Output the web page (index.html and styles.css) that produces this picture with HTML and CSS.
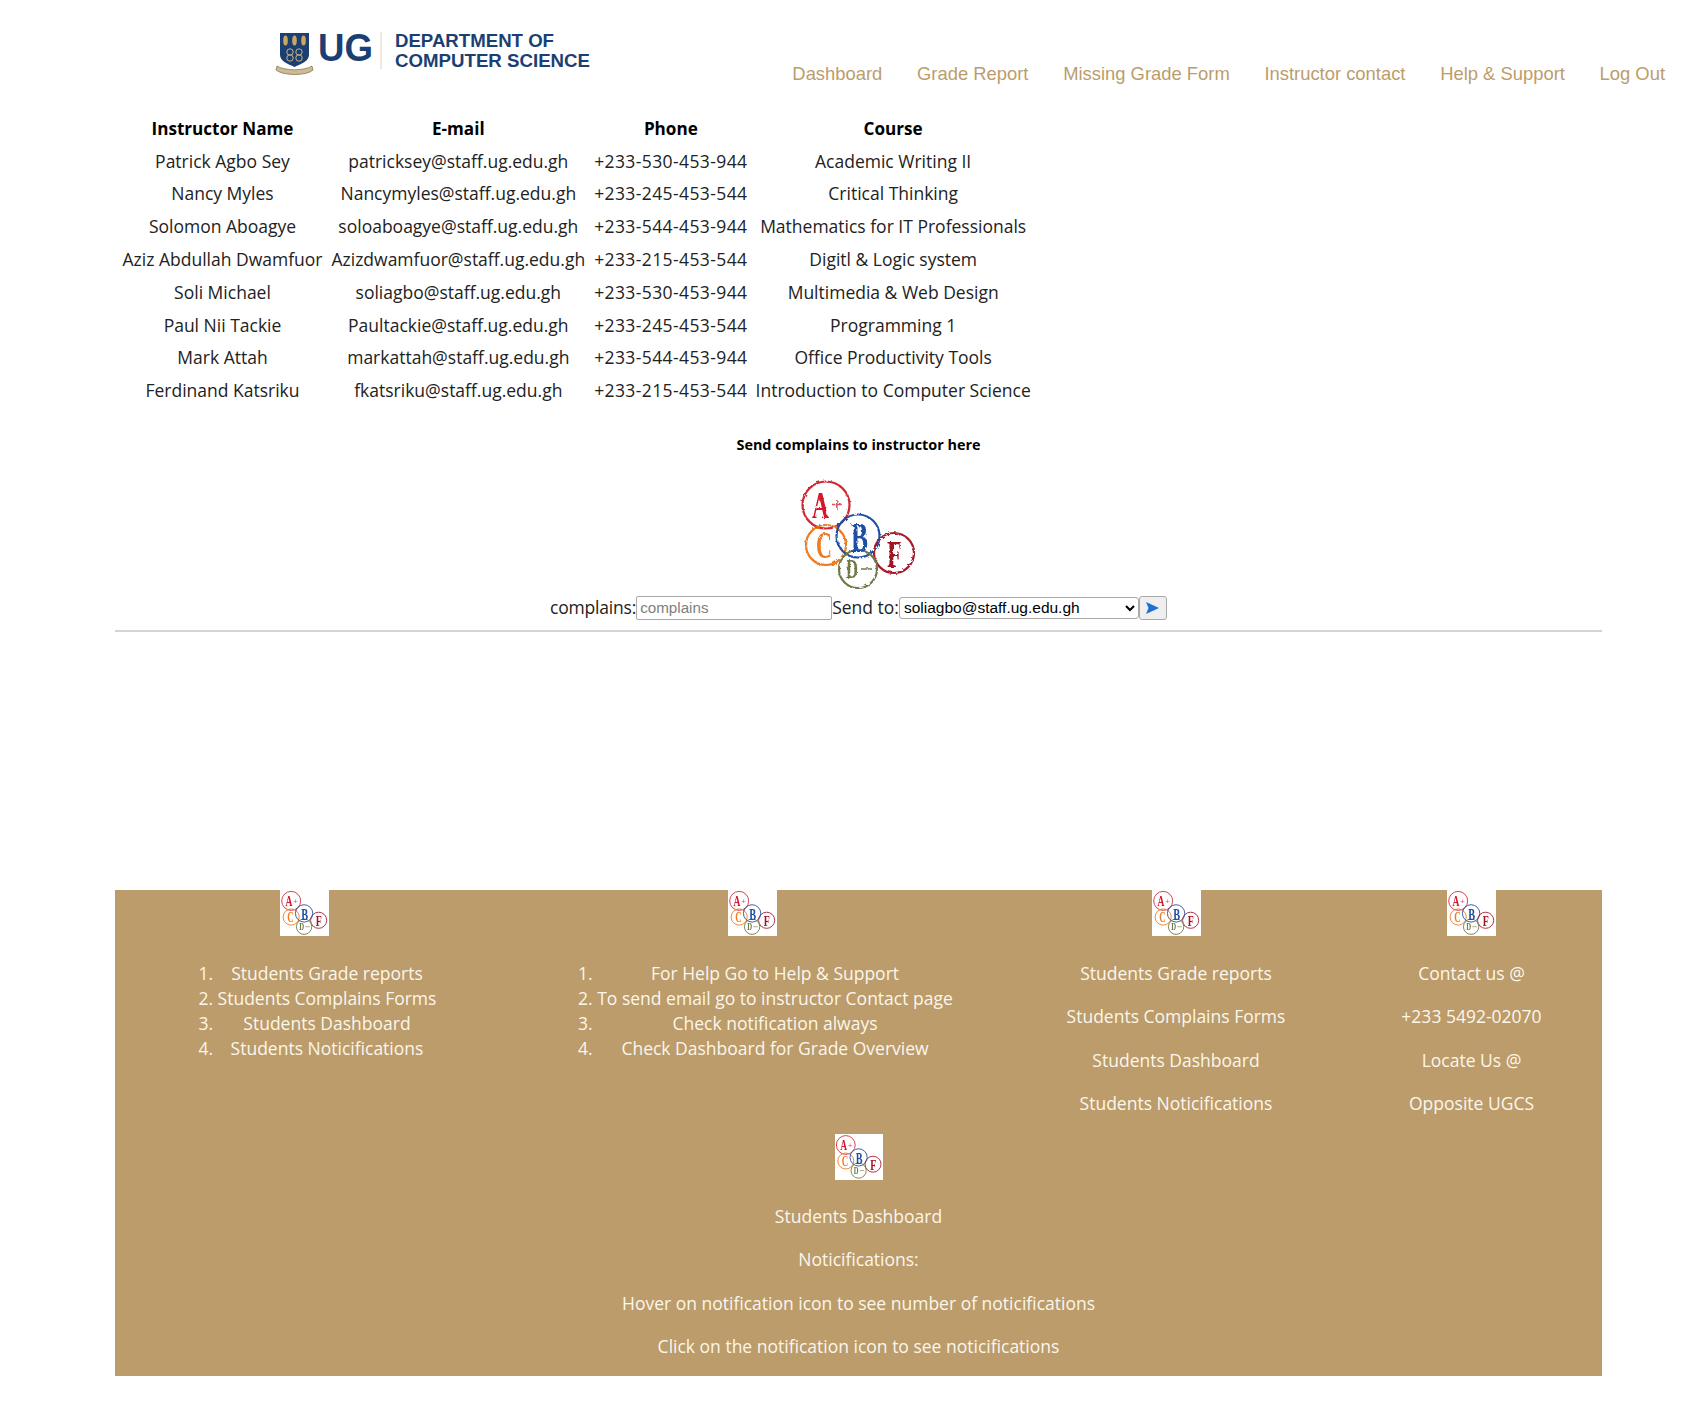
FILE: index.html
```html
<!DOCTYPE html>
<html lang="en">
<head>
<meta charset="utf-8">
<title>Instructor contact</title>
<link rel="stylesheet" href="styles.css">
</head>
<body>
<svg class="defs" width="0" height="0" aria-hidden="true">
  <defs>
    <filter id="rough" x="-5%" y="-5%" width="110%" height="110%">
      <feTurbulence type="fractalNoise" baseFrequency="0.3" numOctaves="2" seed="4"/>
      <feDisplacementMap in="SourceGraphic" scale="3"/>
      <feGaussianBlur stdDeviation="0.35"/>
    </filter>
    <symbol id="grades" viewBox="20 8 120 114">
      <g filter="url(#rough)" fill="none" stroke-width="2.2">
        <circle cx="47" cy="35" r="23.500" stroke="#d22a35"/>
        <circle cx="47" cy="75" r="20" stroke="#ee7b22"/>
        <circle cx="79" cy="66" r="21.500" stroke="#1f4fa3"/>
        <circle cx="115" cy="83" r="20" stroke="#a51f2d"/>
        <circle cx="79" cy="99" r="19" stroke="#6f7a48"/>
        <g stroke="none">
          <text x="33" y="48" class="gl" fill="#d8132a" textLength="17" lengthAdjust="spacingAndGlyphs">A</text>
          <text x="52" y="42" class="gl-plus" fill="#d8535a">+</text>
          <text x="37" y="88" class="gl" fill="#ee7b22" textLength="16" lengthAdjust="spacingAndGlyphs">C</text>
          <text x="72" y="82" class="gl gl-tall" fill="#1f4fa3" textLength="17" lengthAdjust="spacingAndGlyphs">B</text>
          <text x="108" y="97" class="gl" fill="#a01525" textLength="15" lengthAdjust="spacingAndGlyphs">F</text>
          <text x="67" y="108" class="gl gl-low" fill="#6f7a48" textLength="12" lengthAdjust="spacingAndGlyphs">D</text>
          <path d="M82 99h11" stroke="#6f7a48" stroke-width="1.500"/>
        </g>
      </g>
    </symbol>
  </defs>
</svg>

<header class="top">
  <svg class="ug-logo" viewBox="0 0 320 52" role="img" aria-label="UG Department of Computer Science">
    <path d="M5 7H34V29C34 35 26 38 19.500 41C13 38 5 35 5 29Z" fill="#1c3f73"/>
    <g fill="#c9a864">
      <ellipse cx="10.500" cy="14.500" rx="2.300" ry="5"/>
      <ellipse cx="19.500" cy="14.500" rx="2.300" ry="5"/>
      <ellipse cx="28.500" cy="14.500" rx="2.300" ry="5"/>
    </g>
    <g fill="none" stroke="#c9b27c">
      <circle cx="15" cy="26" r="3.200"/>
      <circle cx="24" cy="26" r="3.200"/>
      <circle cx="15" cy="32" r="3.200"/>
      <circle cx="24" cy="32" r="3.200"/>
    </g>
    <path d="M2 40C10 45 29 45 37 40L38 44C32 50 8 50 1 44Z" fill="#cdbb92" stroke="#6b5a35" stroke-width=".6"/>
    <text x="43" y="35" class="ug-mark" textLength="55" lengthAdjust="spacingAndGlyphs">UG</text>
    <path d="M106 6V43" stroke="#e2d5bd"/>
    <text x="120" y="21" class="ug-dept" textLength="159" lengthAdjust="spacingAndGlyphs">DEPARTMENT OF</text>
    <text x="120" y="41" class="ug-dept" textLength="195" lengthAdjust="spacingAndGlyphs">COMPUTER SCIENCE</text>
  </svg>
  <nav class="nav">
    <a href="#">Dashboard</a>
    <a href="#">Grade Report</a>
    <a href="#">Missing Grade Form</a>
    <a href="#">Instructor contact</a>
    <a href="#">Help &amp; Support</a>
    <a href="#">Log Out</a>
  </nav>
</header>

<main class="content">
  <table class="contacts">
    <thead>
      <tr><th>Instructor Name</th><th>E-mail</th><th>Phone</th><th>Course</th></tr>
    </thead>
    <tbody>
      <tr><td>Patrick Agbo Sey</td><td>patricksey@staff.ug.edu.gh</td><td>+233-530-453-944</td><td>Academic Writing II</td></tr>
      <tr><td>Nancy Myles</td><td>Nancymyles@staff.ug.edu.gh</td><td>+233-245-453-544</td><td>Critical Thinking</td></tr>
      <tr><td>Solomon Aboagye</td><td>soloaboagye@staff.ug.edu.gh</td><td>+233-544-453-944</td><td>Mathematics for IT Professionals</td></tr>
      <tr><td>Aziz Abdullah Dwamfuor</td><td>Azizdwamfuor@staff.ug.edu.gh</td><td>+233-215-453-544</td><td>Digitl &amp; Logic system</td></tr>
      <tr><td>Soli Michael</td><td>soliagbo@staff.ug.edu.gh</td><td>+233-530-453-944</td><td>Multimedia &amp; Web Design</td></tr>
      <tr><td>Paul Nii Tackie</td><td>Paultackie@staff.ug.edu.gh</td><td>+233-245-453-544</td><td>Programming 1</td></tr>
      <tr><td>Mark Attah</td><td>markattah@staff.ug.edu.gh</td><td>+233-544-453-944</td><td>Office Productivity Tools</td></tr>
      <tr><td>Ferdinand Katsriku</td><td>fkatsriku@staff.ug.edu.gh</td><td>+233-215-453-544</td><td>Introduction to Computer Science</td></tr>
    </tbody>
  </table>

  <section class="complaint">
    <h2 class="complaint-title">Send complains to instructor here</h2>
    <svg class="grades-large"><use href="#grades"/></svg>
    <form class="complaint-form">
      <label class="field-label field-label-tight" for="complains">complains:</label>
      <input class="field-input" id="complains" type="text" placeholder="complains">
      <label class="field-label" for="sendto">Send to:</label>
      <select class="field-select" id="sendto">
        <option>soliagbo@staff.ug.edu.gh</option>
      </select>
      <button class="send" type="button" aria-label="Send">
        <svg width="13" height="12" viewBox="0 0 13 12"><path d="M0 0L13 6L0 12L2.500 6Z" fill="#1f6fd0"/></svg>
      </button>
    </form>
  </section>
  <hr class="rule">
</main>

<footer class="footer">
  <div class="footer-cols">
    <div class="fcol">
      <svg class="grades-small"><use href="#grades"/></svg>
      <ol class="flist">
        <li>Students Grade reports</li>
        <li>Students Complains Forms</li>
        <li>Students Dashboard</li>
        <li>Students Noticifications</li>
      </ol>
    </div>
    <div class="fcol">
      <svg class="grades-small"><use href="#grades"/></svg>
      <ol class="flist">
        <li>For Help Go to Help &amp; Support</li>
        <li>To send email go to instructor Contact page</li>
        <li>Check notification always</li>
        <li>Check Dashboard for Grade Overview</li>
      </ol>
    </div>
    <div class="fcol">
      <svg class="grades-small"><use href="#grades"/></svg>
      <p>Students Grade reports</p>
      <p>Students Complains Forms</p>
      <p>Students Dashboard</p>
      <p>Students Noticifications</p>
    </div>
    <div class="fcol">
      <svg class="grades-small"><use href="#grades"/></svg>
      <p>Contact us @</p>
      <p>+233 5492-02070</p>
      <p>Locate Us @</p>
      <p>Opposite UGCS</p>
    </div>
  </div>
  <div class="fcol fcol-wide">
    <svg class="grades-small"><use href="#grades"/></svg>
    <p>Students Dashboard</p>
    <p>Noticifications:</p>
    <p>Hover on notification icon to see number of noticifications</p>
    <p>Click on the notification icon to see noticifications</p>
  </div>
</footer>
</body>
</html>
```

FILE: styles.css
```css
* { box-sizing: border-box; }

html, body { margin: 0; padding: 0; background: #fff; }

body {
  height: 1401px;
  font-family: "Open Sans", "Noto Sans", sans-serif;
  font-size: 17.5px;
  line-height: 25px;
  color: #222;
  overflow: hidden;
}

.defs { display: block; height: 0; }

.top {
  display: flex;
  align-items: flex-start;
  justify-content: space-between;
  height: 112px;
  padding: 26px 35px 0 275px;
}

.ug-logo { width: 320px; height: 52px; flex: none; }
.ug-mark { font: bold 39px "Liberation Sans", sans-serif; fill: #1c3f73; }
.ug-dept { font: bold 19px "Liberation Sans", sans-serif; fill: #1c3f73; }

.nav {
  display: flex;
  gap: 34.7px;
  padding-top: 36px;
  font-family: "Liberation Sans", Arial, sans-serif;
  font-size: 18.4px;
  line-height: 24px;
}

.nav a { color: #bb9d6c; text-decoration: none; }

.content { width: 1487px; margin-left: 115px; }

.contacts {
  border-collapse: separate;
  border-spacing: 0;
  margin-left: 3.5px;
}

.contacts th, .contacts td {
  padding: 3.9px 4px;
  text-align: center;
  white-space: nowrap;
  font-weight: 400;
}

.contacts td:nth-child(2) { padding-left: 5px; padding-right: 5px; }
.contacts td:nth-child(3) { letter-spacing: .4px; }

.contacts th { font-size: 17.1px; font-weight: 700; color: #000; }

.complaint { text-align: center; }

.complaint-title {
  margin: 26.500px 0 0;
  font-size: 14.4px;
  line-height: 22px;
  font-weight: 700;
  color: #000;
}

.grades-large {
  display: block;
  width: 120px;
  height: 114px;
  margin: 22px auto 3px;
}

.complaint-form {
  display: flex;
  justify-content: center;
  align-items: center;
  height: 26px;
}

.field-label { white-space: nowrap; }
.field-label-tight { letter-spacing: -.2px; }

.field-input {
  width: 196px;
  height: 24px;
  padding: 1px 3px;
  border: 1px solid #a9a9a9;
  border-radius: 2px;
  background: #fff;
  font: 15.2px "Liberation Sans", sans-serif;
}

.field-input::placeholder { color: #808080; opacity: 1; }

.field-select {
  width: 240px;
  height: 22px;
  padding: 0;
  border: 1px solid #a9a9a9;
  border-radius: 3px;
  background-color: #fff;
  color: #000;
  font: 15.5px "Liberation Sans", sans-serif;
}

.send {
  display: flex;
  align-items: center;
  justify-content: center;
  width: 28px;
  height: 24px;
  padding: 0;
  border: 1px solid #a9a9a9;
  border-radius: 3px;
  background: #efefef;
}

.rule {
  height: 2px;
  margin: 9px 0 0;
  border: 0;
  background: #d4d4d4;
}

.footer {
  width: 1487px;
  height: 486px;
  margin: 258.500px 0 0 115px;
  background: #bb9c6a;
  color: #fbf6ec;
  text-align: center;
}

.footer-cols {
  display: grid;
  grid-template-columns: 378px 518px 330px 261px;
}

.grades-small {
  display: block;
  width: 49px;
  height: 46px;
  margin: 0 auto;
  background: #fff;
}

.fcol p { margin: 0 0 18.4px; }
.fcol .grades-small + p { margin-top: 25px; }

.flist {
  width: fit-content;
  margin: 25px auto 0;
  padding: 0 0 0 46px;
}

.flist li { text-align: center; }

.fcol-wide { margin-top: -1px; }
.fcol-wide .grades-small { width: 48px; }
.fcol-wide .grades-small + p { margin-top: 24.500px; }

.gl { font: bold 38px "Liberation Serif", serif; }
.gl-tall { font-size: 42px; }
.gl-low { font-size: 27px; }
.gl-plus { font: 20px "Liberation Sans", sans-serif; }
```
